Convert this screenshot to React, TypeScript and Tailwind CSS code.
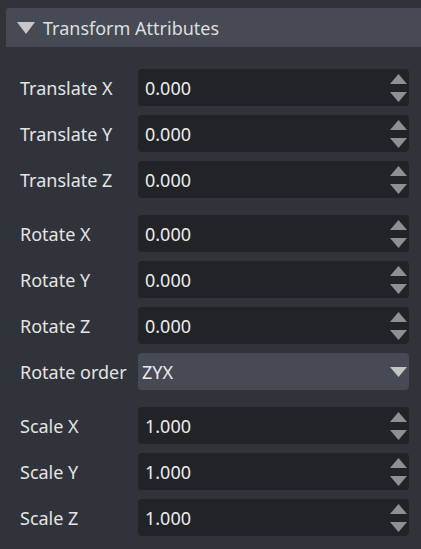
import React from "react";

type Row = { label: string; value: string; kind?: "spin" | "select" };

const groups: Row[][] = [
  [
    { label: "Translate X", value: "0.000" },
    { label: "Translate Y", value: "0.000" },
    { label: "Translate Z", value: "0.000" },
  ],
  [
    { label: "Rotate X", value: "0.000" },
    { label: "Rotate Y", value: "0.000" },
    { label: "Rotate Z", value: "0.000" },
    { label: "Rotate order", value: "ZYX", kind: "select" },
  ],
  [
    { label: "Scale X", value: "1.000" },
    { label: "Scale Y", value: "1.000" },
    { label: "Scale Z", value: "1.000" },
  ],
];

const Triangle = ({ dir, className }: { dir: "up" | "down"; className: string }) => (
  <svg width="17" height="10" viewBox="0 0 17 10" className={className}>
    {dir === "up" ? (
      <polygon points="8.5,0 17,10 0,10" fill="currentColor" />
    ) : (
      <polygon points="0,0 17,0 8.5,10" fill="currentColor" />
    )}
  </svg>
);

const Field = ({ row }: { row: Row }) => (
  <div className="flex items-center h-[37px]">
    <div className="w-[118px] shrink-0 text-[18px] leading-none text-[#e4e4e4] whitespace-nowrap">{row.label}</div>
    {row.kind === "select" ? (
      <div className="flex-1 h-full rounded-[4px] bg-[#464a55] flex items-center justify-between pl-[4px] pr-[2px]">
        <span className="text-[18px] leading-none text-[#ececec]">{row.value}</span>
        <Triangle dir="down" className="text-[#c4c4c4]" />
      </div>
    ) : (
      <div className="flex-1 h-full rounded-[4px] bg-[#222327] flex items-center justify-between pl-[7px] pr-[2px]">
        <span className="text-[18px] leading-none text-[#ececec]">{row.value}</span>
        <div className="flex flex-col gap-[8px]">
          <Triangle dir="up" className="text-[#8f9093]" />
          <Triangle dir="down" className="text-[#8f9093]" />
        </div>
      </div>
    )}
  </div>
);

export default function App() {
  return (
    <div
      className="w-[421px] h-[549px] bg-[#30333a] pt-[8px] overflow-hidden"
      style={{ fontFamily: '"Noto Sans", "Open Sans", sans-serif' }}
    >
      <div className="ml-[6px] h-[39px] bg-[#464a55] rounded-tl-[3px] flex items-center pl-[11px] gap-[8px]">
        <svg width="18" height="12" viewBox="0 0 18 12">
          <polygon points="0,0 18,0 9,12" fill="#c8c8c8" />
        </svg>
        <span className="text-[18px] leading-none text-[#dedede]">Transform Attributes</span>
      </div>
      <div className="pl-[20px] pr-[12px] pt-[22px] flex flex-col gap-[17px]">
        {groups.map((g, i) => (
          <div key={i} className="flex flex-col gap-[9px]">
            {g.map((r) => (
              <Field key={r.label} row={r} />
            ))}
          </div>
        ))}
      </div>
    </div>
  );
}
